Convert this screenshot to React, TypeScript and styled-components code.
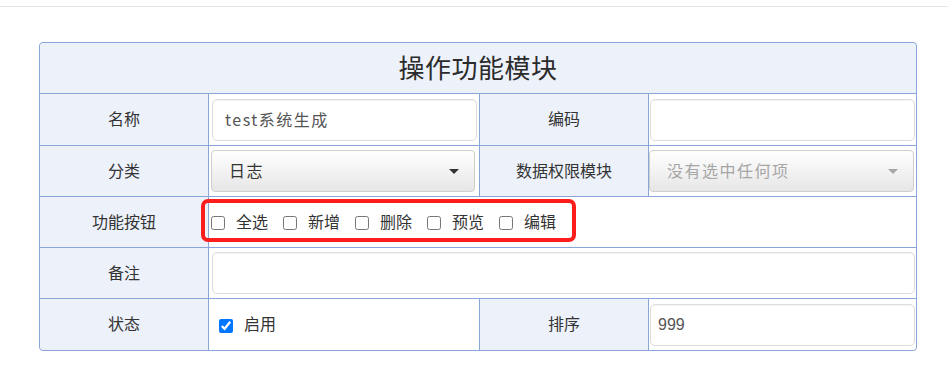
import React from "react";
import styled, { createGlobalStyle } from "styled-components";

const Global = createGlobalStyle`
  html, body { margin: 0; padding: 0; background: #fff; }
  body {
    font-family: "Noto Sans CJK SC", "Noto Sans", sans-serif;
    color: #333;
  }
`;

const TopBar = styled.div`
  height: 6px;
  border-bottom: 1px solid #e6e6e6;
`;

const Content = styled.div`
  padding: 35px 0 0 39px;
`;

const FormGrid = styled.div`
  width: 878px;
  box-sizing: border-box;
  display: grid;
  grid-template-columns: 168px 270px 168px 267px;
  grid-template-rows: 50px 51px 50px 50px 50px 51px;
  gap: 1px;
  background: #8aa5d9;
  border: 1px solid #8aa5d9;
  border-radius: 4px;
  overflow: hidden;
`;

const TitleCell = styled.div`
  grid-column: 1 / -1;
  background: #edf1fa;
  display: flex;
  align-items: center;
  justify-content: center;
  padding-bottom: 4px;
  box-sizing: border-box;
  font-size: 26px;
  font-weight: 400;
  color: #2b2b2b;
  letter-spacing: 0.5px;
`;

const LabelCell = styled.div`
  background: #edf1fa;
  display: flex;
  align-items: center;
  justify-content: center;
  padding-bottom: 3px;
  box-sizing: border-box;
  font-size: 16px;
  color: #333;
`;

const ValueCell = styled.div<{ $pad?: string; $span?: string }>`
  background: #fff;
  display: flex;
  align-items: center;
  box-sizing: border-box;
  padding: ${(p) => p.$pad ?? "0 2px"};
  grid-column: ${(p) => p.$span ?? "auto"};
  min-width: 0;
`;

const TextInput = styled.input<{ $padLeft?: number }>`
  width: 100%;
  height: 42px;
  box-sizing: border-box;
  border: 1px solid #dcdcdc;
  border-radius: 5px;
  padding: 0 8px 2px ${(p) => p.$padLeft ?? 12}px;
  font-family: "Noto Sans CJK SC", "Noto Sans", sans-serif;
  font-size: 16px;
  letter-spacing: 1.5px;
  color: #555;
  background: #fff;
  box-shadow: inset 0 1px 1px rgba(0, 0, 0, 0.05);
  outline: none;
`;

const NumberInput = styled(TextInput)`
  font-family: "Liberation Sans", Arial, sans-serif;
  letter-spacing: 0;
  padding-bottom: 0;
`;

const SelectBox = styled.div<{ $disabled?: boolean }>`
  width: 100%;
  height: 42px;
  box-sizing: border-box;
  display: flex;
  align-items: center;
  justify-content: space-between;
  padding: 0 15px 2px 17px;
  border: 1px solid #cfcfcf;
  border-radius: 4px;
  background: linear-gradient(#ffffff, #e6e6e6);
  font-size: 16px;
  letter-spacing: 1.5px;
  color: ${(p) => (p.$disabled ? "#a6a6a6" : "#333")};
`;

const Caret = styled.span<{ $disabled?: boolean }>`
  width: 0;
  height: 0;
  margin-top: 2px;
  border-left: 5px solid transparent;
  border-right: 5px solid transparent;
  border-top: 5px solid ${(p) => (p.$disabled ? "#a6a6a6" : "#333")};
`;

const CheckGroup = styled.div`
  position: relative;
  display: flex;
  align-items: center;

  &::after {
    content: "";
    position: absolute;
    left: -10px;
    right: -20px;
    top: -12px;
    bottom: -8px;
    border: 4px solid #fd1d1d;
    border-radius: 7px;
    pointer-events: none;
  }
`;

const CheckItem = styled.label`
  display: flex;
  align-items: center;
  margin-right: 15px;
  font-size: 16px;
  line-height: 20px;
  padding-bottom: 3px;
  color: #333;

  &:last-child {
    margin-right: 0;
  }
`;

const CheckBox = styled.input.attrs({ type: "checkbox" })`
  width: 14px;
  height: 14px;
  margin: 5px 11px 0 0;
`;

const actions = ["全选", "新增", "删除", "预览", "编辑"];

export default function App() {
  return (
    <>
      <Global />
      <TopBar />
      <Content>
        <FormGrid>
          <TitleCell>操作功能模块</TitleCell>

          <LabelCell>名称</LabelCell>
          <ValueCell $pad="0 2px 0 3px">
            <TextInput defaultValue="test系统生成" />
          </ValueCell>
          <LabelCell>编码</LabelCell>
          <ValueCell $pad="0 1px">
            <TextInput defaultValue="" />
          </ValueCell>

          <LabelCell>分类</LabelCell>
          <ValueCell $pad="0 4px 0 2px">
            <SelectBox>
              <span>日志</span>
              <Caret />
            </SelectBox>
          </ValueCell>
          <LabelCell>数据权限模块</LabelCell>
          <ValueCell $pad="0 2px 0 0">
            <SelectBox $disabled>
              <span>没有选中任何项</span>
              <Caret $disabled />
            </SelectBox>
          </ValueCell>

          <LabelCell>功能按钮</LabelCell>
          <ValueCell $span="2 / -1" $pad="0 0 0 2px">
            <CheckGroup>
              {actions.map((a) => (
                <CheckItem key={a}>
                  <CheckBox />
                  {a}
                </CheckItem>
              ))}
            </CheckGroup>
          </ValueCell>

          <LabelCell>备注</LabelCell>
          <ValueCell $span="2 / -1" $pad="0 1px 0 3px">
            <TextInput defaultValue="" />
          </ValueCell>

          <LabelCell>状态</LabelCell>
          <ValueCell $pad="0 0 0 10px">
            <CheckItem>
              <CheckBox defaultChecked />
              启用
            </CheckItem>
          </ValueCell>
          <LabelCell>排序</LabelCell>
          <ValueCell $pad="0 1px">
            <NumberInput $padLeft={7} defaultValue="999" />
          </ValueCell>
        </FormGrid>
      </Content>
    </>
  );
}
